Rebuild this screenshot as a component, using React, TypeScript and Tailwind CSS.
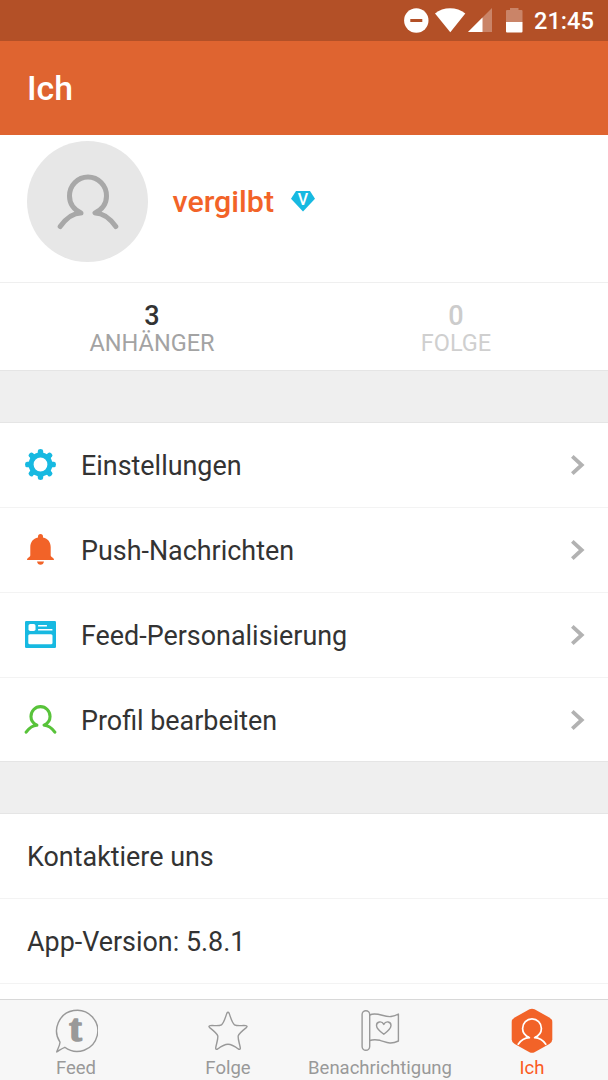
import type { ReactNode } from "react";

interface MenuItem {
  label: string;
  icon: ReactNode;
}

interface Tab {
  label: string;
  icon: ReactNode;
  active?: boolean;
}

function PersonIcon({ className, width }: { className: string; width: number }) {
  return (
    <svg className={className} viewBox="0 0 64 56" fill="none" stroke="currentColor" strokeWidth={width} strokeLinecap="round" strokeLinejoin="round">
      <path d="M4.2 52.5C10 44.500 17 39 25 39C18 35.500 13.500 29.500 13.500 22a18.500 19 0 0 1 37 0C50.500 29.500 46 35.500 39 39C47 39 54 44.500 59.800 52.500" />
    </svg>
  );
}

function GearIcon() {
  return (
    <svg className="w-[31px] h-[31px] text-[#17b9e1]" viewBox="0 0 31 31" fill="currentColor">
      {[0, 45, 90, 135, 180, 225, 270, 315].map(a => (
        <path key={a} transform={`rotate(${a} 15.5 15.5)`} d="M11.500 5.500C13 4.500 12.800 3 12.800 2Q12.800 0 15.500 0T18.200 2C18.200 3 18 4.500 19.500 5.500Z" />
      ))}
      <circle cx="15.5" cy="15.5" r="9.400" fill="none" stroke="currentColor" strokeWidth="5" />
    </svg>
  );
}

function BellIcon() {
  return (
    <svg className="w-[31px] h-[31px] text-[#f26328]" viewBox="0 0 31 31" fill="currentColor">
      <path d="M13 3.500V2.500a2.500 2.500 0 0 1 5 0v1C23 4.500 25.700 8.300 25.700 13v8.200c0 1 .8 1.500 1.700 2.300.9.700 1.600 1.200 1.600 2.500H2c0-1.300.7-1.800 1.600-2.500.9-.8 1.700-1.300 1.700-2.300V13C5.300 8.300 8 4.500 13 3.500Z" />
      <path d="M12 27.500h7c-.3 2-1.700 3.300-3.500 3.300S12.300 29.500 12 27.500Z" />
    </svg>
  );
}

function FeedCardIcon() {
  return (
    <svg className="w-[31px] h-[27px]" viewBox="0 0 31 27">
      <rect width="31" height="27" rx="1.2" fill="#17b9e1" />
      <g fill="#fff">
        <rect x="3.500" y="3" width="7" height="7" rx="1.8" />
        <rect x="13" y="4" width="9" height="1.500" rx=".5" />
        <rect x="13" y="8" width="14.500" height="1.500" rx=".5" />
        <rect x="3.300" y="13.300" width="24.200" height="10" rx="1.500" />
      </g>
    </svg>
  );
}

const menu: MenuItem[] = [
  { label: "Einstellungen", icon: <GearIcon /> },
  { label: "Push-Nachrichten", icon: <BellIcon /> },
  { label: "Feed-Personalisierung", icon: <FeedCardIcon /> },
  { label: "Profil bearbeiten", icon: <PersonIcon className="w-[33px] h-[29px] -mx-px text-[#58c33a]" width={6} /> },
];

const info = ["Kontaktiere uns", "App-Version: 5.8.1"];

const tabs: Tab[] = [
  {
    label: "Feed",
    icon: (
      <svg className="w-11 h-[46px]" viewBox="0 0 44 46" fill="none" stroke="currentColor" strokeWidth="1.400" strokeLinejoin="round">
        <path d="M6 34.200A20.600 20.600 0 1 1 10.800 39.300C8 40.300 5.500 42.300 2.700 44C3.500 41 5.800 38 6 34.200Z" />
        <text x="21.500" y="32.700" textAnchor="middle" fill="currentColor" stroke="currentColor" strokeWidth="1.700" fontFamily="'Liberation Serif', serif" fontWeight="700" fontSize="37.500">t</text>
      </svg>
    ),
  },
  {
    label: "Folge",
    icon: (
      <svg className="w-11 h-[46px]" viewBox="0 0 44 46" fill="none" stroke="currentColor" strokeWidth="1.400" strokeLinejoin="round">
        <path d="M20.800 5.400Q22 3.200 23.200 5.400C25 11 26.500 15.600 28.500 16.800C31 18.300 35.500 17.300 39.800 17.600Q42 18 40.300 19.600C36 23 32.700 25.500 32.200 28C31.800 31 33.500 35.500 34.300 39.800Q34.500 42 32.300 41C29 38.500 25 36.300 22 36.300S15 38.500 11.700 41Q9.500 42 9.700 39.800C10.500 35.500 12.200 31 11.800 28C11.300 25.500 8 23 3.700 19.600Q2 18 4.200 17.600C8.500 17.300 13 18.300 15.500 16.800C17.500 15.600 19 11 20.800 5.400Z" />
      </svg>
    ),
  },
  {
    label: "Benachrichtigung",
    icon: (
      <svg className="w-11 h-[46px]" viewBox="0 0 44 46" fill="none" stroke="currentColor" strokeWidth="1.400" strokeLinejoin="round">
        <rect x="4.100" y="2.700" width="7.600" height="39.600" rx="3.800" />
        <path d="M11.700 7C19 3.500 26 9.500 33 8.500Q37 8 40.400 6V33C32 37 28 34 22 32.300Q16 31 11.700 32.500" />
        <path d="M25.800 26.300C22 23.500 18.500 20.500 18.500 17.500C18.500 13.500 23.800 12.500 25.800 16.400C27.800 12.500 33 13.500 33 17.500C33 20.500 29.500 23.500 25.800 26.300Z" />
      </svg>
    ),
  },
  {
    label: "Ich",
    active: true,
    icon: (
      <svg className="w-11 h-[46px]" viewBox="0 0 44 46" fill="none" strokeLinejoin="round">
        <path d="M19.500 1.300Q22 0 24.500 1.300L39.300 9.500Q42.300 11.300 42.300 14V31.500Q42.300 34.200 39.300 36L24.500 44.200Q22 45.400 19.500 44.200L4.700 36Q1.700 34.200 1.700 31.500V14Q1.700 11.300 4.700 9.500Z" fill="#f26328" />
        <path d="M7.800 36.700C11 32 15 29.800 19.400 29.700C15.500 28 12.600 25 12.600 20.500a9.400 9.600 0 0 1 18.800 0C31.400 25 28.500 28 24.600 29.700C29 29.800 33 32 36.200 36.700" stroke="#fff" strokeWidth="1.700" />
      </svg>
    ),
  },
];

function StatusBar() {
  return (
    <div className="h-[41px] shrink-0 bg-[#b35027] flex items-center justify-end pr-3.5 text-white">
      <svg className="w-[120px] h-[26px]" viewBox="403 8 120 26" fill="#fff">
        <circle cx="416.300" cy="20.500" r="12.200" />
        <rect x="410.300" y="19" width="12" height="3" fill="#b35027" />
        <path d="M450.300 32.300L435 13.500C443 6.500 457 6.500 465.300 13.500Z" />
        <path d="M492 8V32H468Z" opacity=".3" />
        <path d="M482.500 17.500V32H468Z" />
        <path d="M506 22V11Q506 10 507 10h3V8h8.500v2h3Q522.500 10 522.500 11V22Z" opacity=".3" />
        <path d="M506 22H522.500V31.500Q522.500 32.500 521.500 32.500H507Q506 32.500 506 31.500Z" />
      </svg>
      <span className="ml-[11px] pt-[2px] w-[60px] text-[23.6px] leading-none font-medium whitespace-nowrap">21:45</span>
    </div>
  );
}

function Stat({ value, label, muted }: { value: number; label: string; muted?: boolean }) {
  return (
    <div className="flex-1 flex flex-col items-center pt-5">
      <span className={`text-[27px] leading-[27px] font-medium ${muted ? "text-[#cccccc]" : "text-[#333333]"}`}>{value}</span>
      <span className={`text-[23.5px] leading-[26px] ${muted ? "text-[#cfcfcf]" : "text-[#a3a3a3]"}`}>{label}</span>
    </div>
  );
}

export default function App() {
  return (
    <div className="w-[608px] h-[1080px] overflow-hidden flex flex-col bg-white font-['Roboto',sans-serif]">
      <StatusBar />

      <header className="h-[94px] shrink-0 bg-[#df6430] flex items-center pt-[2px] pl-[27px] text-white">
        <h1 className="text-[33.800px] leading-none font-medium">Ich</h1>
      </header>

      <main className="flex-1 min-h-0 overflow-hidden text-[#333333]">
        {/* Profile */}
        <section className="h-[148px] border-b border-[#efefef] flex items-start pt-[6px] pl-[27px]">
          <div className="w-[121px] h-[121px] rounded-full bg-[#e7e7e7] flex items-center justify-center">
            <PersonIcon className="w-16 h-14 text-[#a8a8a8]" width={5} />
          </div>
          <div className="h-[122px] ml-[24.5px] flex items-center">
            <span className="text-[30.400px] leading-none font-medium text-[#f26328]">vergilbt</span>
            <svg className="w-6 h-[21px] ml-[17px] -mt-[2px]" viewBox="0 0 24 21">
              <path d="M5 0H19L24 7.700L12 20.500L0 7.700Z" fill="#17b9e1" />
              <text x="12" y="13.700" textAnchor="middle" fill="#fff" fontFamily="Roboto, sans-serif" fontWeight="500" fontSize="16">V</text>
            </svg>
          </div>
        </section>

        <section className="h-[87px] flex">
          <Stat value={3} label="ANHÄNGER" />
          <Stat value={0} label="FOLGE" muted />
        </section>

        <div className="h-[53px] bg-[#efefef] border-y border-[#e5e5e5]" />

        {/* Menu */}
        <ul className="h-[338px]">
          {menu.map(item => (
            <li key={item.label} className="h-[85px] border-b border-[#f3f3f3] last:h-[84px] last:border-b-0 flex items-center pl-[25px] pr-[23px]">
              <span className="w-[31px] mb-[2px] flex justify-center shrink-0">{item.icon}</span>
              <span className="ml-[25px] pt-[2px] flex-1 text-[26.9px] leading-[27px]">{item.label}</span>
              <svg className="w-[14px] h-5 mb-px" viewBox="0 0 14 20" fill="none" stroke="#b2b2b2" strokeWidth="3.800">
                <path d="M1.300 1.400L10.700 10L1.300 18.600" />
              </svg>
            </li>
          ))}
        </ul>

        <div className="h-[53px] bg-[#efefef] border-y border-[#e5e5e5]" />

        <ul>
          {info.map(text => (
            <li key={text} className="h-[85px] border-b border-[#f3f3f3] flex items-center pt-[2px] pl-[27px] text-[26.9px] leading-[27px]">{text}</li>
          ))}
        </ul>
      </main>

      {/* Bottom tabs */}
      <nav className="h-[81px] shrink-0 bg-[#f7f7f7] border-t border-[#d8d8d8] grid grid-cols-4">
        {tabs.map(tab => (
          <div key={tab.label} className={`flex flex-col items-center pt-[8px] ${tab.active ? "text-[#fb5a1e]" : "text-[#999999]"}`}>
            {tab.icon}
            <span className="mt-[3px] text-[18.500px] leading-[22px] whitespace-nowrap">{tab.label}</span>
          </div>
        ))}
      </nav>
    </div>
  );
}
